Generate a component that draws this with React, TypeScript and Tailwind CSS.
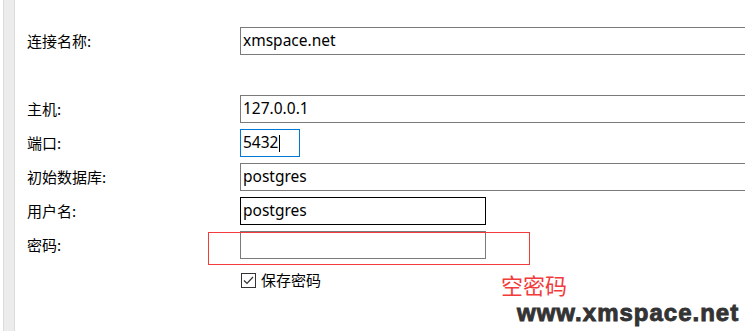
import React from 'react';

const cjk = "font-['Noto_Sans_CJK_SC','Noto_Sans',sans-serif]";
const latin = "font-['Noto_Sans','Noto_Sans_CJK_SC',sans-serif]";

type Row = { label: string; value?: string; width: string; border: string; caret?: boolean };

const rows: (Row | null)[] = [
    { label: '连接名称:', value: 'xmspace.net', width: 'w-[530px]', border: 'border-[#7a7a7a]' },
    null,
    { label: '主机:', value: '127.0.0.1', width: 'w-[530px]', border: 'border-[#7a7a7a]' },
    { label: '端口:', value: '5432', width: 'w-[60px]', border: 'border-[#0078d7]', caret: true },
    { label: '初始数据库:', value: 'postgres', width: 'w-[530px]', border: 'border-[#7a7a7a]' },
    { label: '用户名:', value: 'postgres', width: 'w-[246px]', border: 'border-[#000000]' },
    { label: '密码:', width: 'w-[246px]', border: 'border-[#7a7a7a]' },
];

const Field: React.FC<{ row: Row }> = ({ row }) => (
    <div className="flex items-center h-[28px]">
        <div className={`w-[213px] shrink-0 text-[15px] text-[#000] ${cjk}`}>{row.label}</div>
        <div className={`${row.width} shrink-0 h-[28px] border ${row.border} bg-white flex items-center pl-[2px] text-[15.5px] text-[#000] ${latin}`}>
            {row.value}
            {row.caret && <span className="inline-block w-px h-[17px] bg-black ml-px" />}
        </div>
    </div>
);

export default function App() {
    return (
        <div className="relative w-[745px] h-[331px] overflow-hidden bg-white flex">
            {/* left scroll strip */}
            <div className="ml-[3px] w-[12px] h-full shrink-0 bg-[#ececec] border-x border-[#dcdcdc]" />

            <div className="flex flex-col gap-[6px] pl-[12px] pt-[27px]">
                {rows.map((r, i) =>
                    r ? <Field key={i} row={r} /> : <div key={i} className="h-[28px]" />
                )}
                <div className="flex items-center h-[16px] mt-[7px] pl-[213px]">
                    <div className="w-[15px] h-[15px] border border-[#333] flex items-center justify-center ml-px">
                        <svg width="11" height="9" viewBox="0 0 11 9" fill="none">
                            <path d="M1 4.5 L4 7.5 L10 1" stroke="#333" strokeWidth="1.2" />
                        </svg>
                    </div>
                    <span className={`ml-[5px] text-[15px] text-[#000] ${cjk}`}>保存密码</span>
                </div>
            </div>

            {/* annotations */}
            <div className="absolute left-[208px] top-[232px] w-[322px] h-[33px] border border-[#f23b3b]" />
            <div className={`absolute left-[501px] top-[273px] text-[22px] leading-none text-[#f23b3b] ${cjk}`}>空密码</div>
            <div className="absolute left-[517px] top-[301px] text-[24px] leading-none font-bold tracking-[1px] text-[#333] [-webkit-text-stroke:0.9px_#333] font-['Liberation_Sans',Arial,sans-serif]">
                www.xmspace.net
            </div>
        </div>
    );
}
